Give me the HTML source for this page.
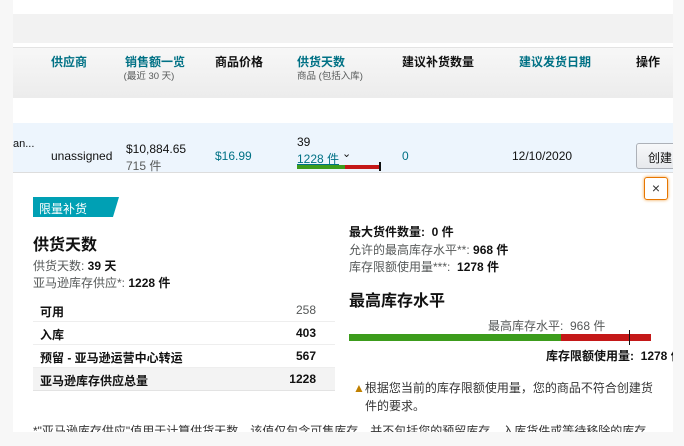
<!DOCTYPE html>
<html><head><meta charset="utf-8"><style>
*{margin:0;padding:0;box-sizing:border-box}
body{width:684px;height:446px;overflow:hidden;background:#f7f7f7;font-family:"Liberation Sans","Noto Sans CJK SC",sans-serif;font-size:11px;color:#111;position:relative}
.a{position:absolute;white-space:nowrap}
.teal{color:#007185}
.g{color:#565959}
b{font-weight:bold}
.r{position:absolute;right:19px;top:4px}
</style></head><body>
<div class="a" style="left:13px;top:0;width:660px;height:432px;background:#fff;overflow:hidden">
 <div class="a" style="left:0;top:14px;width:660px;height:29px;background:#f2f2f2"></div>
 <div class="a" style="left:0;top:47px;width:660px;height:51px;background:linear-gradient(#f7f7f7,#ececec);border-top:1px solid #e3e3e3"></div>
 <div class="a teal" style="left:38px;top:53px;font-weight:bold;font-size:12px">供应商</div>
 <div class="a teal" style="left:112px;top:53px;font-weight:bold;font-size:12px">销售额一览</div>
 <div class="a g" style="left:87px;top:68px;font-size:9.5px;width:98px;text-align:center">(最近 30 天)</div>
 <div class="a" style="left:202px;top:53px;font-weight:bold;font-size:12px">商品价格</div>
 <div class="a teal" style="left:284px;top:53px;font-weight:bold;font-size:12px">供货天数</div>
 <div class="a g" style="left:284px;top:68px;font-size:9.5px">商品 (包括入库)</div>
 <div class="a" style="left:389px;top:53px;font-weight:bold;font-size:12px">建议补货数量</div>
 <div class="a teal" style="left:506px;top:53px;font-weight:bold;font-size:12px">建议发货日期</div>
 <div class="a" style="left:623px;top:53px;font-weight:bold;font-size:12px">操作</div>
 <div class="a" style="left:0;top:123px;width:660px;height:50px;background:#edf5fd"></div>
 <div class="a" style="left:0;top:138px;font-size:11px">an...</div>
 <div class="a" style="left:38px;top:149px;font-size:12px">unassigned</div>
 <div class="a" style="left:113px;top:142px;font-size:12px">$10,884.65</div>
 <div class="a g" style="left:113px;top:157px;font-size:12px">715 件</div>
 <div class="a teal" style="left:202px;top:149px;font-size:12px">$16.99</div>
 <div class="a" style="left:284px;top:135px;font-size:12px">39</div>
 <div class="a teal" style="left:284px;top:150px;text-decoration:underline;font-size:12px">1228 件</div>
 <div class="a" style="left:329px;top:147px;font-size:11px">⌄</div>
 <div class="a" style="left:284px;top:165px;width:48px;height:4px;background:#3c9c1c"></div>
 <div class="a" style="left:332px;top:165px;width:35px;height:4px;background:#c41818"></div>
 <div class="a" style="left:366px;top:162px;width:2px;height:9px;background:#111"></div>
 <div class="a teal" style="left:389px;top:149px;font-size:12px">0</div>
 <div class="a" style="left:499px;top:149px;font-size:12px">12/10/2020</div>
 <div class="a" style="left:623px;top:143px;width:50px;height:26px;border:1px solid #adb1b8;border-radius:3px;background:linear-gradient(#f7f8fa,#e7e9ec);padding:5px 0 0 11px;font-size:12px">创建</div>
 <div class="a" style="left:0;top:172px;width:660px;height:262px;background:#fff;border-top:1px solid #ddd"></div>
 <div class="a" style="left:631px;top:177px;width:24px;height:23px;border:1px solid #e77600;border-radius:3px;box-shadow:0 0 3px #f0a040;text-align:center;line-height:20px;font-size:14px;color:#333">×</div>
 <div class="a" style="left:20px;top:197px;width:86px;height:20px;background:#00a0b4;clip-path:polygon(0 0,100% 0,93% 100%,0 100%);color:#fff;padding:3px 0 0 6px;font-size:12px">限量补货</div>
 <div class="a" style="left:20px;top:231px;font-size:16px;font-weight:bold">供货天数</div>
 <div class="a g" style="left:20px;top:257px;font-size:12px">供货天数: <b style="color:#111">39 天</b></div>
 <div class="a g" style="left:20px;top:274px;font-size:12px">亚马逊库存供应*: <b style="color:#111">1228 件</b></div>
 <div class="a" style="left:20px;top:299px;width:302px;height:23px;border-bottom:1px solid #eee;padding:4px 0 0 7px;font-weight:bold;font-size:12px">可用<span class="r" style="font-weight:normal;color:#565959">258</span></div>
 <div class="a" style="left:20px;top:322px;width:302px;height:23px;border-bottom:1px solid #eee;padding:4px 0 0 7px;font-weight:bold;font-size:12px">入库<span class="r">403</span></div>
 <div class="a" style="left:20px;top:345px;width:302px;height:23px;border-bottom:1px solid #eee;padding:4px 0 0 7px;font-weight:bold;font-size:12px">预留 - 亚马逊运营中心转运<span class="r">567</span></div>
 <div class="a" style="left:20px;top:368px;width:302px;height:23px;background:#f3f3f3;border-bottom:1px solid #e3e3e3;padding:4px 0 0 7px;font-weight:bold;font-size:12px">亚马逊库存供应总量<span class="r">1228</span></div>
 <div class="a" style="left:336px;top:223px;font-weight:bold;font-size:12px">最大货件数量: &nbsp;0 件</div>
 <div class="a g" style="left:336px;top:241px;font-size:12px">允许的最高库存水平**: <b style="color:#111">968 件</b></div>
 <div class="a g" style="left:336px;top:258px;font-size:12px">库存限额使用量***: &nbsp;<b style="color:#111">1278 件</b></div>
 <div class="a" style="left:336px;top:287px;font-size:16px;font-weight:bold">最高库存水平</div>
 <div class="a g" style="left:475px;top:317px;font-size:12px">最高库存水平: &nbsp;968 件</div>
 <div class="a" style="left:336px;top:334px;width:212px;height:7px;background:#3c9c1c"></div>
 <div class="a" style="left:548px;top:334px;width:90px;height:7px;background:#c41818"></div>
 <div class="a" style="left:616px;top:330px;width:1px;height:15px;background:#111"></div>
 <div class="a" style="left:533px;top:347px;font-weight:bold;font-size:12px">库存限额使用量: &nbsp;1278 件</div>
 <div class="a" style="left:340px;top:379px;font-size:12px;color:#333"><span style="color:#c08000">▲</span>根据您当前的库存限额使用量，您的商品不符合创建货</div>
 <div class="a" style="left:352px;top:397px;font-size:12px;color:#333">件的要求。</div>
 <div class="a" style="left:20px;top:422px;font-size:12px;color:#333">*"亚马逊库存供应"值用于计算供货天数，该值仅包含可售库存，并不包括您的预留库存、入库货件或等待移除的库存</div>
</div>
</body></html>
